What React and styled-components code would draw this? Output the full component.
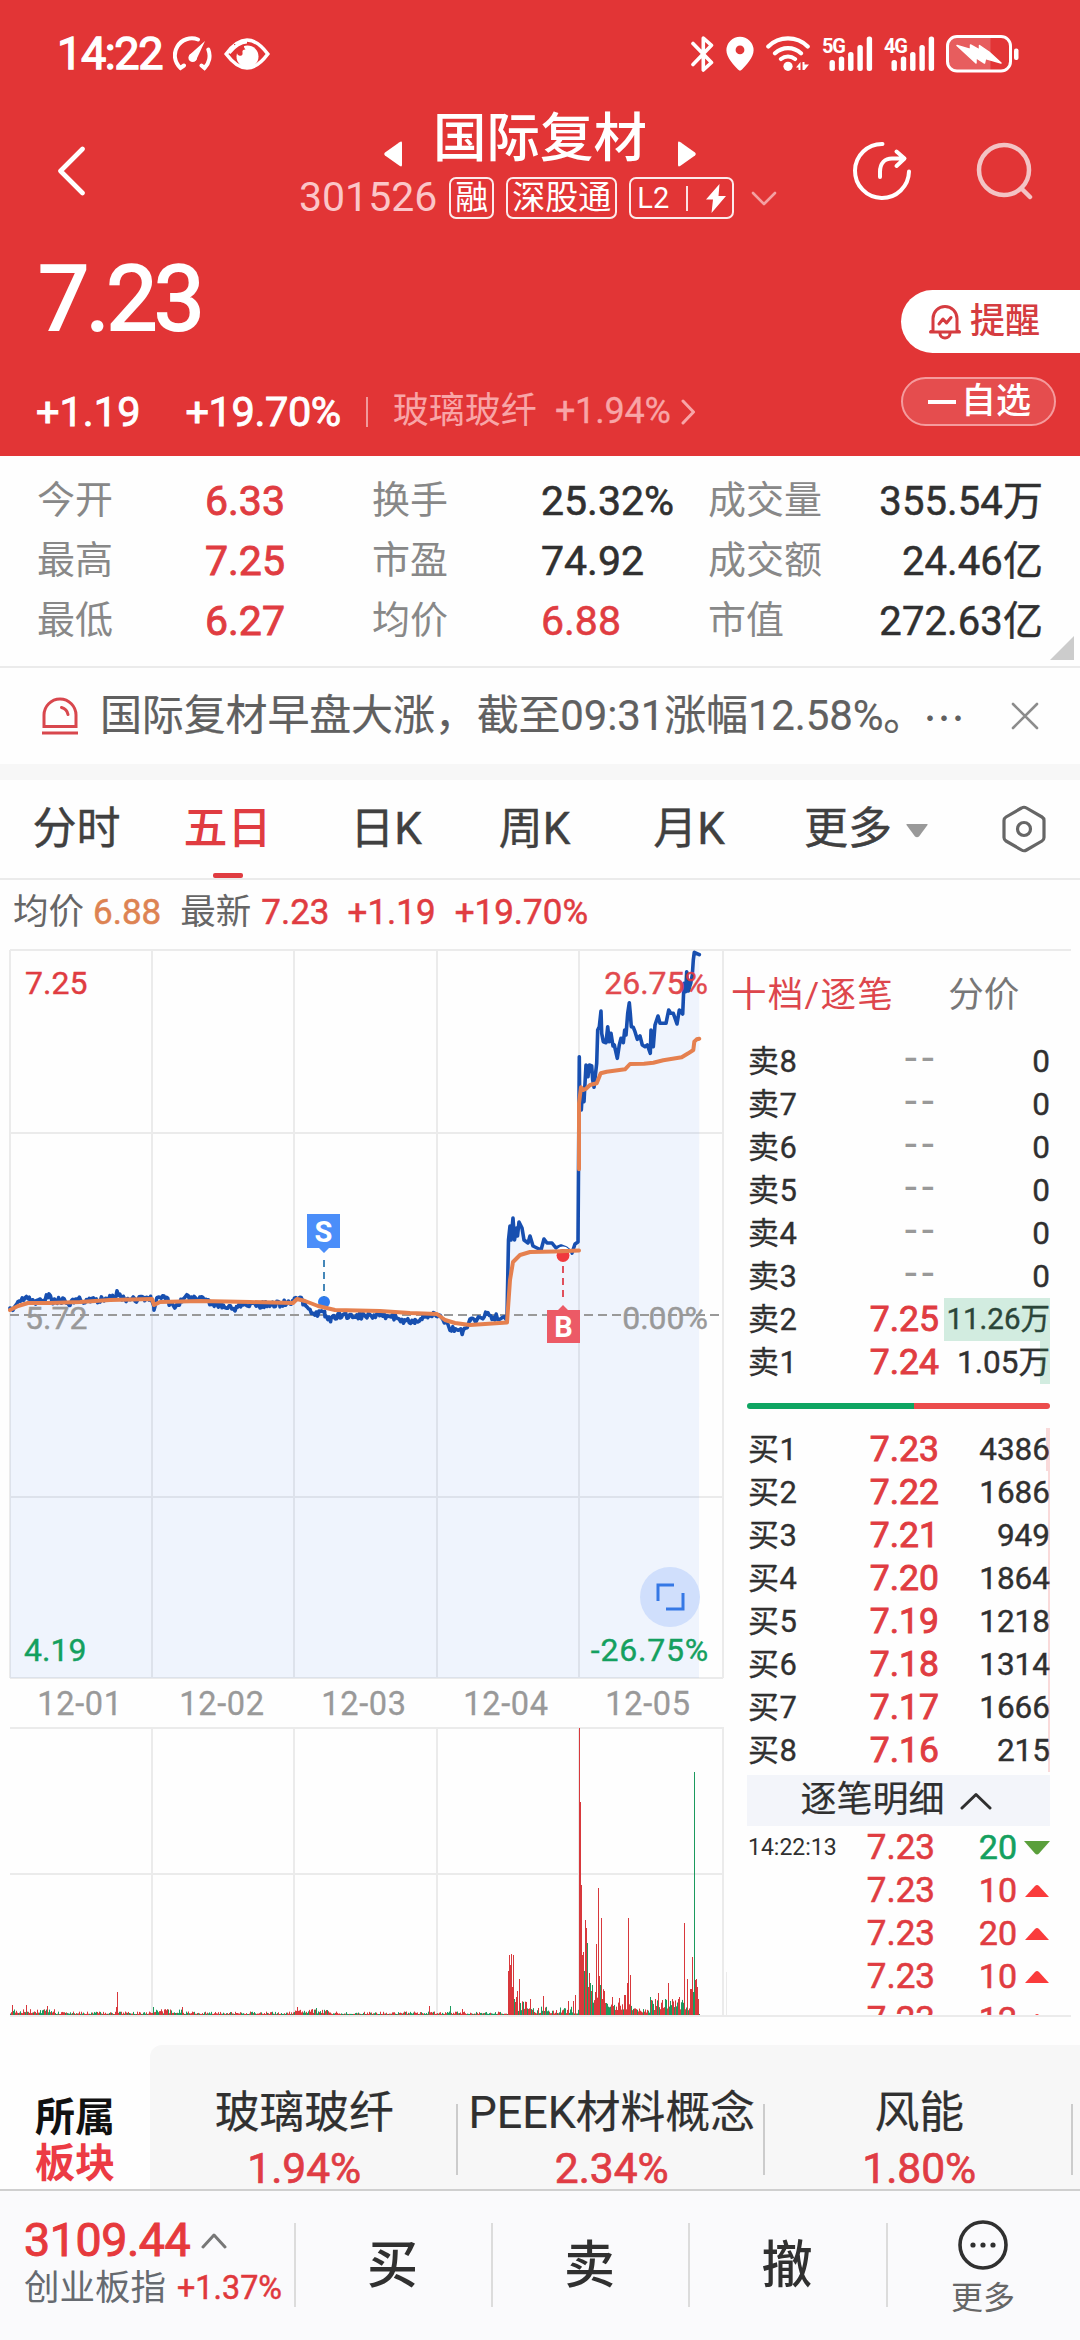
import React from 'react';
import styled, { createGlobalStyle } from 'styled-components';

const RED = '#e23536';
const UP = '#e03c41';
const DOWN = '#14a05f';
const LINE = '#ebebeb';

const Global = createGlobalStyle`
  * { box-sizing: border-box; }
  body {
    margin: 0;
    background: #fff;
    font-family: Roboto, "Noto Sans CJK SC", sans-serif;
    color: #303030;
  }
  svg { display: block; flex: none; }
`;

const Screen = styled.div`
  width: 1080px;
  height: 2340px;
  display: flex;
  flex-direction: column;
  overflow: hidden;
  background: #fefefe;
`;

const Text = styled.span`
  font-size: ${(p) => p.$size}px;
  line-height: ${(p) => p.$lh || 1.2};
  font-weight: ${(p) => p.$weight || 400};
  letter-spacing: ${(p) => p.$ls || 0}px;
  color: ${(p) => p.$color || 'inherit'};
  -webkit-text-stroke: ${(p) => p.$st || 0}px currentColor;
  white-space: nowrap;
`;

/* ---------- header ---------- */

const Header = styled.header`
  height: 456px;
  flex: none;
  background: ${RED};
  color: #fff;
`;

const StatusBar = styled.div`
  height: 108px;
  padding: 0 61px 0 57px;
  display: flex;
  justify-content: space-between;
  align-items: center;
`;

const StatusGroup = styled.div`
  display: flex;
  align-items: center;
  gap: 12px;
`;

const Clock = styled(Text)`
  width: 104px;
  white-space: nowrap;
`;

const NavBar = styled.div`
  height: 126px;
  display: grid;
  grid-template-columns: 298px 554px 1fr;
`;

const NavBack = styled.div`
  display: flex;
  align-items: center;
  padding-left: 56px;
`;

const NavTitle = styled.div`
  display: flex;
  flex-direction: column;
`;

const NameRow = styled.div`
  height: 60px;
  padding: 2px 0 0 86px;
  display: flex;
  align-items: center;
  gap: 31px;
  svg { margin-top: 30px; }
`;

const CodeRow = styled.div`
  height: 60px;
  padding-left: 1px;
  display: flex;
  align-items: center;
`;

const Tag = styled.span`
  height: 42px;
  width: ${(p) => p.$w}px;
  margin-left: 12px;
  border: 2px solid rgba(255, 255, 255, 0.9);
  border-radius: 7px;
  display: flex;
  align-items: center;
  justify-content: center;
`;

const TagRule = styled.i`
  width: 2px;
  height: 25px;
  margin: 0 18px 0 17px;
  background: rgba(255, 255, 255, 0.85);
`;

const MoreTags = styled.span`
  margin-left: 17px;
`;

const NavActions = styled.div`
  display: flex;
  align-items: center;
  gap: 64px;
`;

const QuoteBlock = styled.div`
  height: 222px;
  display: flex;
  justify-content: space-between;
`;

const QuoteMain = styled.div`
  padding-left: 36px;
`;

const PriceLine = styled.div`
  height: 128px;
  padding: 3px 0 0 2px;
  display: flex;
  align-items: center;
`;

const ChangeLine = styled.div`
  height: 94px;
  padding-top: 5px;
  display: flex;
  align-items: center;
`;

const ChangePct = styled(Text)`
  margin-left: 45px;
`;

const SectorPct = styled(Text)`
  margin: 0 10px 0 18px;
`;

const ChangeRule = styled.i`
  width: 2px;
  height: 30px;
  margin: 0 25px 0 25px;
  background: rgba(255, 255, 255, 0.5);
`;

const QuoteActions = styled.div`
  width: 179px;
  padding-top: 56px;
  display: flex;
  flex-direction: column;
  gap: 24px;
`;

const RemindButton = styled.div`
  height: 63px;
  padding-left: 27px;
  border-radius: 32px 0 0 32px;
  background: #fff;
  color: #d53c40;
  display: flex;
  align-items: center;
  gap: 8px;
`;

const WatchButton = styled.div`
  width: 155px;
  height: 49px;
  padding-left: 25px;
  border: 2px solid #f59b9d;
  border-radius: 25px;
  background: rgba(255, 255, 255, 0.12);
  display: flex;
  align-items: center;
  gap: 5px;
`;

const Minus = styled.i`
  width: 28px;
  height: 4px;
  background: #fff;
`;

/* ---------- stats ---------- */

const Stats = styled.section`
  height: 212px;
  flex: none;
  padding: 14px 7px 6px 37px;
  display: flex;
  border-bottom: 2px solid ${LINE};
`;

const StatGrid = styled.div`
  width: 1006px;
  flex: none;
  display: grid;
  grid-template-columns: 168px 167px 169px 167px 111px 224px;
  grid-auto-rows: 60px;
  align-items: center;
`;

const StatLabel = styled(Text)`
  padding-top: 1px;
`;

const StatValue = styled(Text)`
  padding-top: 3px;
  text-align: ${(p) => (p.$end ? 'right' : 'left')};
`;

const Corner = styled.i`
  align-self: flex-end;
  width: 0;
  height: 0;
  margin-left: 7px;
  border-left: 24px solid transparent;
  border-bottom: 24px solid #ccc;
`;

/* ---------- alert ---------- */

const Alert = styled.section`
  height: 96px;
  flex: none;
  padding: 0 41px 0 42px;
  display: flex;
  align-items: center;
  color: #606060;
  > :last-child { margin-left: auto; }
`;

const AlertText = styled(Text)`
  margin-left: 22px;
  width: 823px;
`;

const AlertDots = styled(Text)`
  font-family: "Noto Sans CJK SC", sans-serif;
`;

const Band = styled.div`
  height: 16px;
  flex: none;
  background: #f7f7f7;
`;

/* ---------- period tabs ---------- */

const Periods = styled.nav`
  height: 100px;
  flex: none;
  display: grid;
  grid-template-columns: 153px 149px 168px 129px 180px 1fr 78px;
  border-bottom: 2px solid ${LINE};
`;

const Period = styled.div`
  display: flex;
  flex-direction: column;
  align-items: center;
  justify-content: space-between;
  padding-top: 23px;
  color: ${(p) => (p.$active ? UP : '#404040')};
  &::after {
    content: '';
    width: 30px;
    height: 5px;
    border-radius: 2px;
    background: ${(p) => (p.$active ? UP : 'transparent')};
  }
`;

const MorePeriods = styled.div`
  padding: 23px 0 0 25px;
  display: flex;
  align-items: flex-start;
  gap: 14px;
  color: #404040;
  svg { margin-top: 21px; }
`;

const PeriodSettings = styled.div`
  padding-top: 25px;
`;

const Legend = styled.div`
  height: 69px;
  flex: none;
  padding: 0 0 4px 13px;
  display: flex;
  align-items: center;
`;

const LegendItem = styled(Text)`
  margin-right: ${(p) => p.$mr}px;
`;

/* ---------- market area ---------- */

const Market = styled.section`
  height: 1068px;
  flex: none;
  display: flex;
`;

const Charts = styled.div`
  width: 727px;
  flex: none;
  display: flex;
  flex-direction: column;
`;

const DateRow = styled.div`
  height: 47px;
  padding: 1px 4px 0 9px;
  display: grid;
  grid-template-columns: repeat(5, 142px);
  align-items: center;
  text-align: center;
  color: #999;
`;

const Book = styled.aside`
  width: 344px;
  overflow: hidden;
  border-top: 2px solid ${LINE};
  border-bottom: 2px solid ${LINE};
  padding-left: 20px;
`;

const BookTabs = styled.div`
  height: 89px;
  margin-left: -16px;
  display: flex;
  align-items: center;
  gap: 54px;
`;

const BookRow = styled.div`
  position: relative;
  width: 303px;
  height: 43px;
  padding-left: 1px;
  display: grid;
  grid-template-columns: 90px 101px 1fr;
  align-items: center;
  > :nth-child(2), > :nth-child(3) { text-align: right; }
`;

const NoPrice = styled(Text)`
  padding-bottom: 6px;
`;

const Depth = styled.i`
  position: absolute;
  top: 0;
  right: 0;
  height: 43px;
  width: ${(p) => p.$w}px;
  background: ${(p) => (p.$sell ? 'rgba(20,160,95,.19)' : 'rgba(226,53,54,.18)')};
`;

const Ratio = styled.div`
  width: 303px;
  height: 6px;
  margin: 19px 0;
  border-radius: 3px;
  overflow: hidden;
  display: flex;
`;

const RatioPart = styled.i`
  flex: ${(p) => p.$share};
  background: ${(p) => p.$color};
`;

const DetailBar = styled.div`
  width: 303px;
  height: 51px;
  margin-top: 3px;
  padding-right: 5px;
  background: #f3f5fa;
  display: flex;
  align-items: center;
  justify-content: center;
  gap: 15px;
`;

const TickRow = styled.div`
  width: 303px;
  height: 43px;
  padding-left: 1px;
  display: grid;
  grid-template-columns: 89px 98px 82px 33px;
  align-items: center;
  > :nth-child(2), > :nth-child(3) { text-align: right; }
  svg { justify-self: end; }
`;

/* ---------- sectors ---------- */

const Sectors = styled.section`
  height: 172px;
  flex: none;
  padding-top: 28px;
  display: flex;
  overflow: hidden;
`;

const SectorLabel = styled.div`
  width: 150px;
  padding: 50px 0 0 35px;
  display: flex;
  flex-direction: column;
`;

const SectorList = styled.div`
  flex: 1;
  background: #f7f7f7;
  border-radius: 12px 0 0 0;
  display: grid;
  grid-template-columns: repeat(3, 307.5px);
`;

const Sector = styled.div`
  padding: 37px 0 0 1px;
  display: flex;
  flex-direction: column;
  align-items: center;
  background: linear-gradient(#ccc, #ccc) right 59px / 2px 71px no-repeat;
`;

/* ---------- bottom bar ---------- */

const BottomBar = styled.footer`
  flex: 1;
  background: #fafafc;
  border-top: 2px solid #cfcfcf;
  display: grid;
  grid-template-columns: 294px 197px 197px 198px 1fr;
`;

const IndexCell = styled.div`
  padding: 25px 0 0 24px;
  display: flex;
  flex-direction: column;
`;

const IndexLine = styled.div`
  height: ${(p) => p.$h}px;
  display: flex;
  align-items: center;
  gap: 11px;
`;

const BarCell = styled.div`
  background: linear-gradient(#dcdcdc, #dcdcdc) left 32px / 2px 84px no-repeat;
  padding-top: ${(p) => p.$top}px;
  display: flex;
  flex-direction: column;
  align-items: center;
`;

/* ---------- icons ---------- */

const GaugeIcon = () => (
  <svg width="39" height="36" viewBox="0 0 39 36" fill="none" stroke="#fff" strokeWidth="4" strokeLinecap="round">
    <path d="M11 29.5 7.5 32A17 17 0 0 1 25 3.5M35.3 13.5A17 17 0 0 1 31.5 32L28.5 29.5" />
    <path d="M32 5 23.4 23.5a4.3 4.3 0 0 1-7-4.6Z" fill="#fff" stroke="none" />
    <circle cx="19.7" cy="21.8" r="4.3" fill="#fff" stroke="none" />
  </svg>
);

const EyeIcon = () => (
  <svg width="46" height="34" viewBox="0 0 46 34" fill="none">
    <path d="M2.2 17C10 6.5 16 3 23 3s13 3.5 20.8 14C36 27.5 30 31 23 31S10 27.5 2.2 17Z" stroke="#fff" strokeWidth="3.6" />
    <circle cx="23.5" cy="19.5" r="11" fill="#fff" />
    <path d="M10 18V7h11c-1.500 1.500-1.500 3.500.5 5.500-2-.2-3.500 1-3 3 .5 2.500-1 4-3.500 3-1.500-.6-2-1.500-2-3Z" fill={RED} />
    <path d="M5 16C11 8.500 16.500 4.800 23 4.800" stroke="#fff" strokeWidth="3.6" />
  </svg>
);

const BluetoothIcon = () => (
  <svg width="23" height="36" viewBox="0 0 23 36" fill="none" stroke="#fff" strokeWidth="3.6" strokeLinecap="round" strokeLinejoin="round">
    <path d="M2 7.5 20.5 26.5 12.3 34V2l8.2 7.3L2 28.5" />
  </svg>
);

const PinIcon = () => (
  <svg width="28" height="36" viewBox="0 0 28 36">
    <path d="M14 .8A13.600 13.600 0 0 0 .4 14.300C.4 22 8 29 12 33.600c1.300 1.500 2.700 1.500 4 0C20 29 27.600 22 27.600 14.300A13.600 13.600 0 0 0 14 .8Zm0 8.700a4.400 4.400 0 1 1 0 8.800 4.400 4.400 0 0 1 0-8.800Z" fill="#fff" fillRule="evenodd" />
  </svg>
);

const WifiIcon = () => (
  <svg width="44" height="36" viewBox="0 0 44 36" fill="none" stroke="#fff" strokeWidth="4.2" strokeLinecap="round">
    <path d="M2.3 10.5a28 28 0 0 1 39.4 0M9 17.2a19 19 0 0 1 26 0M15 23a11 11 0 0 1 14 0" />
    <circle cx="22" cy="30.3" r="4.6" fill="#fff" stroke="none" />
    <path d="M30 31.5 34.500 26v8h-2v-2.500ZM36.500 26h2v2.500h4.500L38.500 34h-2Z" fill="#fff" stroke="none" />
  </svg>
);

const SignalIcon = ({ label }) => (
  <svg width="50" height="36" viewBox="0 0 50 36" fill="#fff" overflow="visible">
    <text x="0" y="17" fontSize="20" fontWeight="700" letterSpacing="-1.2">{label}</text>
    {[11, 14.5, 19, 26, 34.5].map((h, i) => (
      <rect key={h} x={7.5 + i * 9.3} y={35 - h} width="5.4" height={h} rx="2.5" />
    ))}
  </svg>
);

const BatteryIcon = () => (
  <svg width="73" height="38" viewBox="0 0 73 38">
    <path d="M10 2.5h34.5v33H10a8 8 0 0 1-8-8v-17a8 8 0 0 1 8-8Z" fill="rgba(255,255,255,.2)" />
    <rect x="1.5" y="1.5" width="63" height="34.5" rx="9.5" fill="none" stroke="#fff" strokeWidth="3" />
    <rect x="68" y="13.5" width="4.5" height="11.5" rx="2" fill="#fff" />
    <path d="M11 10.5 24.500 14.500V10l9 5V10.500L43 17l12 11-15.500-4.500L38.500 28l-8.500-5.500V28Z" fill="#fff" stroke="#fff" strokeWidth="1.5" strokeLinejoin="round" />
  </svg>
);

const BackIcon = () => (
  <svg width="30" height="50" viewBox="0 0 30 50" fill="none" stroke="#fff" strokeWidth="4.6" strokeLinecap="round" strokeLinejoin="round">
    <path d="M26.5 3 4.5 25l22 22" />
  </svg>
);

const TriangleIcon = ({ flip }) => (
  <svg width="18" height="26" viewBox="0 0 18 26">
    <path d={flip ? 'M0 2Q0-.5 2.5 1.2L17 11.5Q18.5 13 17 14.5L2.5 24.8Q0 26.5 0 24Z' : 'M18 2Q18-.5 15.5 1.2L1 11.5Q-.5 13 1 14.5L15.5 24.8Q18 26.5 18 24Z'} fill="#fff" />
  </svg>
);

const BoltIcon = () => (
  <svg width="20" height="29" viewBox="0 0 20 29">
    <path d="M13.5 0 0 15.5h7L5.5 29 20 12h-7.500Z" fill="#fff" />
  </svg>
);

const ShareIcon = () => (
  <svg width="60" height="60" viewBox="0 0 60 60" fill="none" stroke="#fff" strokeWidth="4" strokeLinecap="round" strokeLinejoin="round">
    <path d="M30.5 3A27 27 0 1 0 57 30.5M28 36v-5c0-9 5-13.5 12-13.5h12M44.5 10.5l8 7-8 7.500" />
  </svg>
);

const SearchIcon = () => (
  <svg width="58" height="58" viewBox="0 0 58 58" fill="none" stroke="#f3c3c4" strokeWidth="4.5" strokeLinecap="round">
    <circle cx="28" cy="28" r="25" />
    <path d="m46.5 47.5 7.5 7.500" />
  </svg>
);

const Caret = ({ w, h, d, color, sw = 3 }) => (
  <svg width={w} height={h} viewBox={`0 0 ${w} ${h}`} fill="none" stroke={color} strokeWidth={sw} strokeLinecap="round" strokeLinejoin="round">
    <path d={d} />
  </svg>
);

const BellIcon = () => (
  <svg width="34" height="36" viewBox="0 0 34 36" fill="none" stroke="#d53c40" strokeWidth="3" strokeLinecap="round" strokeLinejoin="round">
    <path d="M5 26V14.5a12 12 0 0 1 24 0V26l2.5 2h-29ZM12 29.5a5 4.500 0 0 0 10 0M11 20l4-5 3.500 4 4.500-5.500" />
  </svg>
);

const SirenIcon = () => (
  <svg width="36" height="38" viewBox="0 0 36 38" fill="none" stroke="#d8474d" strokeWidth="3">
    <path d="M2 29.5V18a16 16 0 0 1 32 0v11.500ZM0 36h36" />
    <path d="M19.5 10.5q5.500 1.500 6.500 7" strokeLinecap="round" />
  </svg>
);

const CloseIcon = () => (
  <svg width="28" height="28" viewBox="0 0 28 28" stroke="#8c8c8c" strokeWidth="2.6" strokeLinecap="round">
    <path d="m2 2 24 24M26 2 2 26" />
  </svg>
);

const HexIcon = () => (
  <svg width="44" height="48" viewBox="0 0 44 48" fill="none" stroke="#666" strokeWidth="3.2" strokeLinejoin="round">
    <path d="M19.5 3Q22 1.500 24.500 3L40 12q2 1.200 2 3.500v17q0 2.300-2 3.500L24.500 45q-2.500 1.500-5 0L4 36q-2-1.200-2-3.500v-17Q2 13.200 4 12Z" />
    <circle cx="22" cy="24" r="6.5" />
  </svg>
);

const MoreIcon = () => (
  <svg width="50" height="50" viewBox="0 0 50 50" fill="#303030">
    <circle cx="25" cy="25" r="23" fill="none" stroke="#303030" strokeWidth="3.6" />
    <circle cx="15" cy="25" r="2.6" />
    <circle cx="25" cy="25" r="2.6" />
    <circle cx="35" cy="25" r="2.6" />
  </svg>
);

const TickArrow = ({ down }) => (
  <svg width="26" height="14" viewBox="0 0 26 14">
    <path d={down ? 'M0 0h26L15 12.500q-2 1.800-4 0Z' : 'M1 13h24L15 2q-2-1.800-4 0Z'} fill={down ? '#5a9f3b' : '#fa3b3b'} />
  </svg>
);

/* ---------- chart data ---------- */

function makeRandom(seed) {
  let s = seed;
  return () => {
    s = (s * 16807) % 2147483647;
    return s / 2147483647;
  };
}

const PRICE_KEYS = [
  [10, 1311], [14, 1306], [18, 1299], [30, 1299], [36, 1303], [45, 1299], [49, 1295], [53, 1301], [65, 1300], [70, 1303],
  [78, 1298], [85, 1301], [100, 1300], [113, 1298], [117, 1293], [122, 1298], [135, 1300], [145, 1299], [151, 1297],
  [154, 1309], [157, 1297], [165, 1297], [172, 1306], [178, 1306], [184, 1296], [190, 1299], [200, 1299], [210, 1303],
  [222, 1305], [235, 1308], [245, 1304], [260, 1305], [280, 1304], [293, 1301], [297, 1296], [303, 1302], [312, 1313],
  [325, 1314], [331, 1320], [340, 1315], [360, 1316], [380, 1315], [395, 1317], [405, 1321], [415, 1322], [425, 1315],
  [436, 1315], [445, 1321], [450, 1330], [458, 1328], [463, 1333], [470, 1321], [480, 1318], [488, 1313], [492, 1317], [506, 1317],
];

const SURGE = [
  [507, 1316], [508.5, 1240], [510, 1226], [511, 1240], [513, 1218], [514.5, 1240], [516.5, 1228], [517.5, 1236], [519, 1222],
  [522, 1228], [524, 1240], [528, 1243], [530, 1236], [533, 1246], [537, 1248], [541, 1250], [544, 1239], [547, 1243],
  [552, 1243], [556, 1248], [561, 1246], [566, 1248], [572, 1253], [575, 1244], [578, 1242], [578.5, 1170],
];

const DAY5_PRICE = [
  [118, 380], [119, 500], [124, 540], [127, 490], [132, 515], [138, 405], [144, 440], [148, 405], [155, 408], [158, 450], [162, 472],
  [170, 400], [173, 300], [178, 290], [183, 243], [185, 310], [190, 335], [198, 338], [203, 290], [208, 335], [213, 310], [219, 348],
  [223, 345], [232, 385], [238, 345], [243, 325], [250, 338], [254, 300], [258, 315], [263, 250], [268, 218], [271, 250],
  [274, 290], [280, 292], [285, 305], [292, 328], [300, 318], [307, 345], [315, 350], [322, 345], [331, 370], [333, 300],
  [340, 350], [345, 285], [354, 258], [360, 280], [378, 280], [386, 240], [392, 250], [400, 250], [411, 282], [418, 240],
  [428, 252], [432, 160], [437, 185], [440, 125], [445, 183], [452, 160], [457, 135], [460, 90], [463, 67], [478, 74],
].map(([x, y]) => [540 + x / 3, 930 + y / 3]);

const AVERAGE = [
  [10, 1310], [18, 1306], [28, 1303], [50, 1303], [80, 1302], [110, 1300], [152, 1299], [154, 1305], [160, 1302], [200, 1301],
  [250, 1302], [293, 1303], [297, 1299], [305, 1301], [318, 1306], [335, 1310], [380, 1311], [410, 1313], [437, 1314],
  [445, 1320], [455, 1323], [470, 1325], [485, 1324], [507, 1322.5], [510, 1280], [513, 1262], [520, 1255], [530, 1252],
  [555, 1251.5], [579, 1250.5],
];

const DAY5_AVERAGE = [
  [117, 718], [117, 520], [123, 472], [130, 480], [138, 476], [150, 465], [170, 460], [182, 430], [200, 425], [255, 418], [270, 402],
  [312, 401], [340, 398], [370, 391], [425, 382], [445, 370], [460, 360], [463, 335], [470, 328], [478, 326],
].map(([x, y]) => [540 + x / 3, 930 + y / 3]);

function buildPrice() {
  const rnd = makeRandom(41);
  const out = [];
  for (let i = 0; i < PRICE_KEYS.length - 1; i += 1) {
    const [x0, y0] = PRICE_KEYS[i];
    const [x1, y1] = PRICE_KEYS[i + 1];
    for (let x = x0; x < x1; x += 1.4) {
      const t = (x - x0) / (x1 - x0);
      out.push([x, y0 + (y1 - y0) * t + (rnd() - 0.5) * 6]);
    }
  }
  return [...out, ...SURGE, ...DAY5_PRICE];
}

const toPoints = (list) => list.map(([x, y]) => `${x.toFixed(1)},${y.toFixed(1)}`).join(' ');
const PRICE_POINTS = toPoints(buildPrice());

const SPIKES = [
  [12, 10], [26, 10], [47, 9], [117, 23], [116, 8], [153, 8, 1], [182, 8], [297, 8], [316, 7, 1], [429, 9], [450, 9, 1], [462, 6],
  [508, 44], [509, 60], [510, 50], [511, 61], [512, 28], [513, 60], [514, 16, 1], [515, 13], [516, 18], [517, 24], [519, 36], [520, 12, 1],
  [530, 16], [543, 19], [568, 14], [573, 14], [575, 20], [579, 287], [580, 213], [581, 130], [582, 60], [583, 63], [584, 44, 1],
  [585, 95], [586, 87], [587, 72, 1], [588, 28], [589, 42], [590, 32, 1], [591, 24], [592, 30, 1], [596, 71], [598, 127],
  [599, 39], [600, 30, 1], [601, 97], [602, 16], [604, 24], [612, 18], [619, 17], [624, 20], [625, 20], [627, 32], [628, 97], [630, 40],
  [650, 18, 1], [651, 15], [655, 16], [658, 22], [662, 15], [668, 32], [670, 14, 1], [679, 18], [684, 92], [687, 36],
  [690, 26], [691, 26], [692, 58], [693, 23, 1], [694, 243, 1], [695, 35], [696, 36], [697, 28], [698, 16],
];

function buildVolume() {
  const rnd = makeRandom(97);
  const bars = [];
  for (let x = 10; x < 700; x += 1) {
    const r = rnd();
    let h = 1 + r * r * 2.5;
    if ((x < 55) || (x > 152 && x < 182) || (x > 294 && x < 330)) h = 1.5 + r * 4.5;
    if (x > 507 && x < 530) h = 4 + r * 10;
    if (x >= 530 && x < 579) h = 1.5 + r * r * 7;
    if (x >= 579 && x < 606) h = 9 + r * 19;
    if (x >= 606 && x < 632) h = 4 + r * 9;
    if (x >= 632 && x < 650) h = 2 + r * 5;
    if (x >= 650 && x < 699) h = 3 + r * 13;
    bars.push({ x, h, green: rnd() > 0.55 });
  }
  SPIKES.forEach(([x, h, g]) => {
    bars[x - 10] = { x, h, green: Boolean(g) };
  });
  return bars;
}

const VOLUME = buildVolume();
const GRID_X = [152, 294, 437, 579];

function PriceChart() {
  return (
    <svg width="727" height="731" viewBox="0 949 727 731">
      <g stroke={LINE} strokeWidth="2" fill="none">
        <path d="M10 950H727M10 1133H723M10 1497H723M10 1678H723M10 950V1678M723 950V1678" />
        {GRID_X.map((x) => <path key={x} d={`M${x} 950V1678`} />)}
      </g>
      <polygon points={`10,1678 ${PRICE_POINTS} 699,1678`} fill="rgba(40,110,235,.072)" />
      <path d="M10 1315H723" stroke="#999" strokeWidth="2" strokeDasharray="9 5" />
      <g fontSize="32" strokeWidth=".4">
        <text x="25" y="993.5" fill={UP} stroke={UP}>7.25</text>
        <text x="25" y="1329" fill="#999" stroke="#999">5.72</text>
        <text x="708" y="1329" fill="#999" stroke="#999" textAnchor="end">0.00%</text>
        <text x="24" y="1661" fill={DOWN} stroke={DOWN}>4.19</text>
        <text x="709" y="1661" fill={DOWN} stroke={DOWN} textAnchor="end" letterSpacing=".8">-26.75%</text>
      </g>
      <circle cx="324" cy="1302" r="6" fill="#2f7bef" />
      <polyline points={PRICE_POINTS} fill="none" stroke="#174fb0" strokeWidth="3.6" strokeLinejoin="round" strokeLinecap="round" />
      <circle cx="563" cy="1254" r="7.5" fill="#fff" />
      <circle cx="563" cy="1255.5" r="6.5" fill="#f03a3e" />
      <g fill="none" stroke="#e5804f" strokeWidth="4" strokeLinejoin="round" strokeLinecap="round">
        <polyline points={toPoints(AVERAGE)} />
        <polyline points={toPoints(DAY5_AVERAGE)} />
      </g>
      <text x="708" y="993.5" fontSize="32" fill={UP} stroke={UP} strokeWidth=".4" opacity=".93" textAnchor="end">26.75%</text>
      <path d="M324 1260V1297" stroke="#4587b8" strokeWidth="2" strokeDasharray="7 5" />
      <path d="M307 1214h33v34h-11l-5 5-5-5h-12Z" fill="#4b8ef9" />
      <path d="M563 1266V1302" stroke="#e0505c" strokeWidth="2" strokeDasharray="7 5" />
      <path d="M547 1310h11l5-5 5 5h12v33h-33Z" fill="#ec5a66" />
      <g fontSize="29" fontWeight="700" fill="#fff" textAnchor="middle">
        <text x="323.5" y="1241.5">S</text>
        <text x="563.5" y="1337">B</text>
      </g>
      <circle cx="670" cy="1597" r="30" fill="#d0dffc" />
      <path d="M658 1601V1585H674M683 1593V1609H666" fill="none" stroke="#3578e5" strokeWidth="3" />
    </svg>
  );
}

function VolumeChart() {
  return (
    <svg width="727" height="290" viewBox="0 1727 727 290">
      <g stroke={LINE} strokeWidth="2" fill="none">
        <path d="M10 1728H723M10 1874H723M10 2016H727M723 1727V2016" />
        {GRID_X.map((x) => <path key={x} d={`M${x} 1727V2016`} />)}
        <path d="M726.5 1972V2015" strokeWidth="1" />
      </g>
      {VOLUME.map((b) => (
        <rect key={b.x} x={b.x} y={2015 - b.h} width="1" height={b.h} fill={b.green ? '#1c9a5e' : '#d8383c'} />
      ))}
    </svg>
  );
}

/* ---------- content ---------- */

const STATS = [
  ['今开', '6.33', 1, '换手', '25.32%', 0, '成交量', '355.54万'],
  ['最高', '7.25', 1, '市盈', '74.92', 0, '成交额', '24.46亿'],
  ['最低', '6.27', 1, '均价', '6.88', 1, '市值', '272.63亿'],
];

const SELLS = [
  ['卖8'], ['卖7'], ['卖6'], ['卖5'], ['卖4'], ['卖3'],
  ['卖2', '7.25', '11.26万', 106], ['卖1', '7.24', '1.05万', 10],
];

const BUYS = [
  ['买1', '7.23', '4386', 4], ['买2', '7.22', '1686', 2], ['买3', '7.21', '949', 2], ['买4', '7.20', '1864', 2],
  ['买5', '7.19', '1218', 2], ['买6', '7.18', '1314', 2], ['买7', '7.17', '1666', 2], ['买8', '7.16', '215', 2],
];

const TICKS = [
  ['14:22:13', '7.23', '20', true], ['', '7.23', '10'], ['', '7.23', '20'], ['', '7.23', '10'], ['', '7.23', '12'],
];

const SECTORS = [['玻璃玻纤', '1.94%'], ['PEEK材料概念', '2.34%'], ['风能', '1.80%']];

function Level({ row, sell }) {
  const [name, price, vol, depth] = row;
  return (
    <BookRow>
      <Text $size={31} $ls={0.5} $st={0.3}>{name}</Text>
      {price
        ? <Text $size={35.5} $st={0.9} $color={UP}>{price}</Text>
        : <NoPrice $size={44} $ls={5} $lh={0.8} $color="#999">--</NoPrice>}
      <Text $size={vol && vol.length > 5 ? 29.5 : 31.5} $st={0.4}>{vol || '0'}</Text>
      {depth ? <Depth $w={depth} $sell={sell} /> : null}
    </BookRow>
  );
}

export default function App() {
  return (
    <Screen>
      <Global />
      <Header>
        <StatusBar>
          <StatusGroup>
            <Clock $size={45} $st={1.3} $ls={-1.4}>14:22</Clock>
            <GaugeIcon />
            <EyeIcon />
          </StatusGroup>
          <StatusGroup>
            <BluetoothIcon />
            <PinIcon />
            <WifiIcon />
            <SignalIcon label="5G" />
            <SignalIcon label="4G" />
            <BatteryIcon />
          </StatusGroup>
        </StatusBar>
        <NavBar>
          <NavBack><BackIcon /></NavBack>
          <NavTitle>
            <NameRow>
              <TriangleIcon />
              <Text $size={53.5} $weight={500}>国际复材</Text>
              <TriangleIcon flip />
            </NameRow>
            <CodeRow>
              <Text $size={41} $color="#fbc6c8">301526</Text>
              <Tag $w={45}><Text $size={33}>融</Text></Tag>
              <Tag $w={111}><Text $size={33}>深股通</Text></Tag>
              <Tag $w={105}>
                <Text $size={29}>L2</Text>
                <TagRule />
                <BoltIcon />
              </Tag>
              <MoreTags>
                <Caret w={26} h={15} d="M2 2 13 13 24 2" color="#f4a0a2" sw={2.6} />
              </MoreTags>
            </CodeRow>
          </NavTitle>
          <NavActions>
            <ShareIcon />
            <SearchIcon />
          </NavActions>
        </NavBar>
        <QuoteBlock>
          <QuoteMain>
            <PriceLine><Text $size={91} $st={2} $ls={-3.5}>7.23</Text></PriceLine>
            <ChangeLine>
              <Text $size={41.5} $st={0.9}>+1.19</Text>
              <ChangePct $size={41.5} $st={0.9} $ls={-0.4}>+19.70%</ChangePct>
              <ChangeRule />
              <Text $size={36} $color="#f8a5a7">玻璃玻纤</Text>
              <SectorPct $size={36} $ls={-0.2} $color="#f8a5a7" $st={0.3}>+1.94%</SectorPct>
              <Caret w={15} h={26} d="M2 2 12.5 13 2 24" color="#f8a5a7" />
            </ChangeLine>
          </QuoteMain>
          <QuoteActions>
            <RemindButton><BellIcon /><Text $size={35} $weight={500}>提醒</Text></RemindButton>
            <WatchButton><Minus /><Text $size={35} $weight={500}>自选</Text></WatchButton>
          </QuoteActions>
        </QuoteBlock>
      </Header>

      <Stats>
        <StatGrid>
          {STATS.map(([a, av, au, b, bv, bu, c, cv]) => (
            <React.Fragment key={a}>
              <StatLabel $size={38} $color="#888">{a}</StatLabel>
              <StatValue $size={41} $st={0.9} $color={au ? UP : '#303030'}>{av}</StatValue>
              <StatLabel $size={38} $color="#888">{b}</StatLabel>
              <StatValue $size={41} $st={0.6} $color={bu ? UP : '#303030'}>{bv}</StatValue>
              <StatLabel $size={38} $color="#888">{c}</StatLabel>
              <StatValue $size={40} $st={0.5} $ls={0.1} $end>{cv}</StatValue>
            </React.Fragment>
          ))}
        </StatGrid>
        <Corner />
      </Stats>

      <Alert>
        <SirenIcon />
        <AlertText $size={42} $ls={-0.15} $st={0.2}>国际复材早盘大涨，截至09:31涨幅12.58%。</AlertText>
        <AlertDots $size={42}>…</AlertDots>
        <CloseIcon />
      </Alert>
      <Band />

      <Periods>
        <Period><Text $size={44} $st={0.4}>分时</Text></Period>
        <Period $active><Text $size={44} $weight={500}>五日</Text></Period>
        <Period><Text $size={44} $st={0.4}>日K</Text></Period>
        <Period><Text $size={44} $st={0.4}>周K</Text></Period>
        <Period><Text $size={44} $st={0.4}>月K</Text></Period>
        <MorePeriods>
          <Text $size={44} $st={0.4}>更多</Text>
          <svg width="22" height="14" viewBox="0 0 22 14"><path d="M1 0h20q1 0 .5 1L13 12.500q-2 1.500-4 0L.5 1Q0 0 1 0Z" fill="#999" /></svg>
        </MorePeriods>
        <PeriodSettings><HexIcon /></PeriodSettings>
      </Periods>

      <Legend>
        <LegendItem $size={35.5} $color="#666" $mr={9}>均价</LegendItem>
        <LegendItem $size={35} $st={0.5} $color="#dd8352" $mr={19}>6.88</LegendItem>
        <LegendItem $size={35.5} $color="#666" $mr={10}>最新</LegendItem>
        <LegendItem $size={35} $st={0.5} $color={UP} $mr={18}>7.23</LegendItem>
        <LegendItem $size={35} $st={0.5} $color={UP} $mr={19}>+1.19</LegendItem>
        <LegendItem $size={35} $st={0.5} $color={UP} $mr={0}>+19.70%</LegendItem>
      </Legend>

      <Market>
        <Charts>
          <PriceChart />
          <DateRow>
            {['12-01', '12-02', '12-03', '12-04', '12-05'].map((d) => (
              <Text key={d} $size={32.5} $ls={0.7} $st={0.3}>{d}</Text>
            ))}
          </DateRow>
          <VolumeChart />
        </Charts>
        <Book>
          <BookTabs>
            <Text $size={35.5} $ls={1.3} $color="#dd464c">十档/逐笔</Text>
            <Text $size={35.5} $color="#777">分价</Text>
          </BookTabs>
          {SELLS.map((r) => <Level key={r[0]} row={r} sell />)}
          <Ratio>
            <RatioPart $share={167} $color="#0ea562" />
            <RatioPart $share={136} $color="#eb4c4c" />
          </Ratio>
          {BUYS.map((r) => <Level key={r[0]} row={r} />)}
          <DetailBar>
            <Text $size={36} $st={0.2}>逐笔明细</Text>
            <Caret w={32} h={18} d="M2 16 16 2.5 30 16" color="#303030" />
          </DetailBar>
          {TICKS.map(([time, price, vol, down], i) => (
            <TickRow key={i}>
              <Text $size={23}>{time}</Text>
              <Text $size={35} $st={0.6} $color={UP}>{price}</Text>
              <Text $size={34} $st={0.6} $color={down ? DOWN : UP}>{vol}</Text>
              <TickArrow down={down} />
            </TickRow>
          ))}
        </Book>
      </Market>

      <Sectors>
        <SectorLabel>
          <Text $size={40} $weight={700} $lh="46px" $color="#111">所属</Text>
          <Text $size={40} $weight={700} $lh="46px" $color="#ec3b44">板块</Text>
        </SectorLabel>
        <SectorList>
          {SECTORS.map(([name, pct]) => (
            <Sector key={name}>
              <Text $size={44.8} $lh="62px" $st={0.2}>{name}</Text>
              <Text $size={42.5} $lh="50px" $st={0.7} $color="#e03c44">{pct}</Text>
            </Sector>
          ))}
        </SectorList>
      </Sectors>

      <BottomBar>
        <IndexCell>
          <IndexLine $h={50}>
            <Text $size={46.5} $st={1} $ls={-0.4} $color="#e6393c">3109.44</Text>
            <Caret w={26} h={16} d="M2 14 13 2 24 14" color="#777" />
          </IndexLine>
          <IndexLine $h={44}>
            <Text $size={35.5} $color="#666a70">创业板指</Text>
            <Text $size={32.3} $st={0.5} $color="#e0383c">+1.37%</Text>
          </IndexLine>
        </IndexCell>
        <BarCell $top={44}><Text $size={51} $weight={500}>买</Text></BarCell>
        <BarCell $top={44}><Text $size={51} $weight={500}>卖</Text></BarCell>
        <BarCell $top={44}><Text $size={51} $weight={500}>撤</Text></BarCell>
        <BarCell $top={29}>
          <MoreIcon />
          <Text $size={32} $lh="56px" $color="#666">更多</Text>
        </BarCell>
      </BottomBar>
    </Screen>
  );
}
